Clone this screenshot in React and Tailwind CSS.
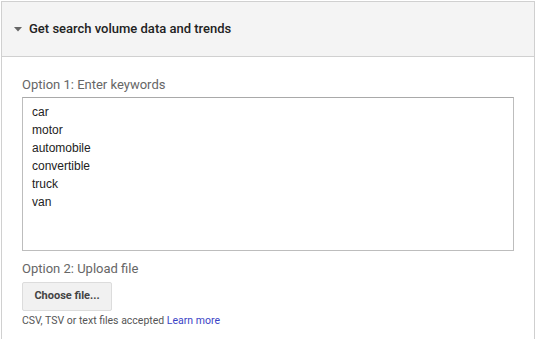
export default function App() {
  const words = ["car", "motor", "automobile", "convertible", "truck", "van"];
  return (
    <div className="w-[535px] h-[339px] bg-white pt-px pl-px overflow-hidden">
      <div className="w-[534px] h-[400px] border border-[#d0d0d0] border-r-[#cfcfcf]">
        <div className="h-[55px] bg-[#f4f4f4] border-b border-[#d0d0d0] flex items-center pl-[12px]">
          <svg width="8" height="5" viewBox="0 0 8 5" className="mr-[7px] mt-px">
            <path d="M0 0 L8 0 L4 4.5 Z" fill="#666" />
          </svg>
          <span className="text-[13px] font-medium text-[#222] font-['Roboto',sans-serif] leading-[20px]">
            Get search volume data and trends
          </span>
        </div>
        <div className="pl-[20px] pt-[18px] font-['Roboto',sans-serif]">
          <div className="text-[13px] leading-[20px] text-[#666]">Option 1: Enter keywords</div>
          <div className="mt-[2px] w-[492px] h-[154px] border border-[#bdbdbd] border-t-[#a9a9a9] pl-[9px] pt-[5px] font-['Liberation_Sans',Arial,sans-serif] text-[12px] leading-[18px] text-[#222]">
            {words.map((w) => (
              <div key={w}>{w}</div>
            ))}
          </div>
          <div className="mt-[8px] text-[13px] leading-[20px] text-[#666]">Option 2: Upload file</div>
          <div className="mt-[3px] w-[90px] h-[29px] rounded-[2px] bg-[#f1f1f1] border border-[#dcdcdc] flex items-center justify-center text-[11px] font-bold text-[#444]">
            Choose file...
          </div>
          <div className="mt-[3px] text-[10.5px] leading-[14px] text-[#555]">
            CSV, TSV or text files accepted <span className="text-[#3b43c6]">Learn more</span>
          </div>
        </div>
      </div>
    </div>
  );
}
